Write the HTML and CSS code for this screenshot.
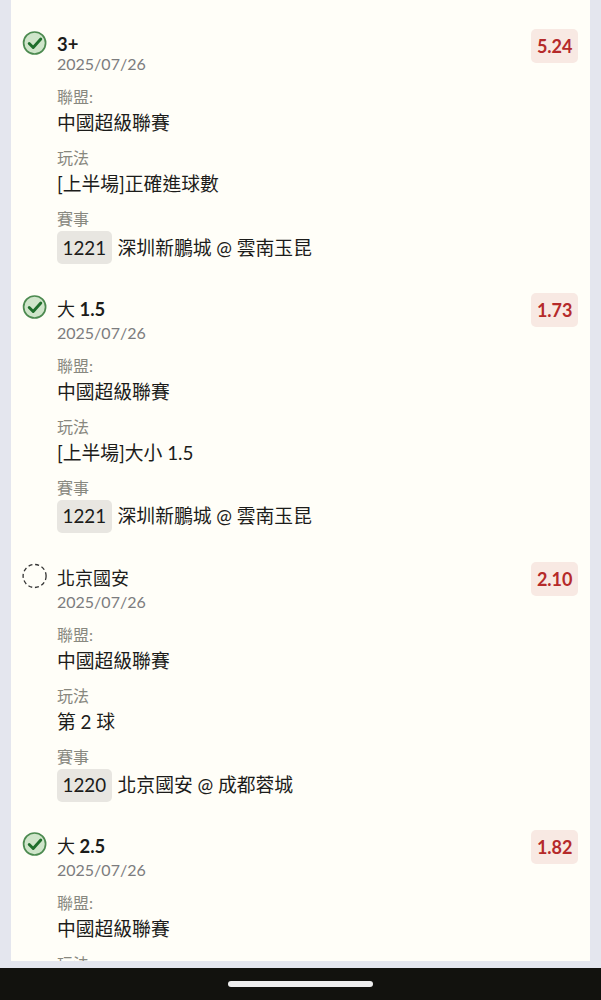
FILE: index.html
```html
<!DOCTYPE html>
<html lang="zh-Hant">
  <head>
    <meta charset="utf-8" />
    <meta name="viewport" content="width=device-width, initial-scale=1.0" />
    <title>投注記錄</title>
    <link rel="stylesheet" href="styles.css">
  </head>

  <body>
    <main class="side">
      <section class="liste">
        <article class="bet">
          <svg class="status" viewBox="0 0 26 26"><circle cx="12.6" cy="13" r="11" class="ring" /><path d="M7.2 13.5l4 4 7.6-8.5" class="tick" /></svg>
          <div class="info">
            <h2 class="valg">3+</h2>
            <p class="dato">2025/07/26</p>
            <p class="label">聯盟:</p>
            <p class="vaerdi">中國超級聯賽</p>
            <p class="label">玩法</p>
            <p class="vaerdi">[上半場]正確進球數</p>
            <p class="label">賽事</p>
            <p class="kamp"><span class="nummer">1221</span>深圳新鵬城 @ 雲南玉昆</p>
          </div>
          <span class="odds">5.24</span>
        </article>

        <article class="bet">
          <svg class="status" viewBox="0 0 26 26"><circle cx="12.6" cy="13" r="11" class="ring" /><path d="M7.2 13.5l4 4 7.6-8.5" class="tick" /></svg>
          <div class="info">
            <h2 class="valg kinesisk"><span class="tynd">大</span> 1.5</h2>
            <p class="dato">2025/07/26</p>
            <p class="label">聯盟:</p>
            <p class="vaerdi">中國超級聯賽</p>
            <p class="label">玩法</p>
            <p class="vaerdi">[上半場]大小 1.5</p>
            <p class="label">賽事</p>
            <p class="kamp"><span class="nummer">1221</span>深圳新鵬城 @ 雲南玉昆</p>
          </div>
          <span class="odds">1.73</span>
        </article>

        <article class="bet">
          <svg class="status" viewBox="0 0 26 26"><circle cx="12.6" cy="13" r="11.5" class="venter" /></svg>
          <div class="info">
            <h2 class="valg kinesisk tynd">北京國安</h2>
            <p class="dato">2025/07/26</p>
            <p class="label">聯盟:</p>
            <p class="vaerdi">中國超級聯賽</p>
            <p class="label">玩法</p>
            <p class="vaerdi">第 2 球</p>
            <p class="label">賽事</p>
            <p class="kamp"><span class="nummer">1220</span>北京國安 @ 成都蓉城</p>
          </div>
          <span class="odds">2.10</span>
        </article>

        <article class="bet">
          <svg class="status" viewBox="0 0 26 26"><circle cx="12.6" cy="13" r="11" class="ring" /><path d="M7.2 13.5l4 4 7.6-8.5" class="tick" /></svg>
          <div class="info">
            <h2 class="valg kinesisk"><span class="tynd">大</span> 2.5</h2>
            <p class="dato">2025/07/26</p>
            <p class="label">聯盟:</p>
            <p class="vaerdi">中國超級聯賽</p>
            <p class="label">玩法</p>
          </div>
          <span class="odds">1.82</span>
        </article>
      </section>
    </main>

    <footer class="navbar"><span class="home"></span></footer>
  </body>
</html>
```

FILE: styles.css
```css
* {
  box-sizing: border-box;
}

body {
  display: flex;
  flex-direction: column;
  height: 1000px;
  margin: 0;
  overflow: hidden;
  font-family: Lato, "Noto Sans CJK TC", sans-serif;
  color: #1c1c1a;
  background-color: #e4e6ee;
}

p,
h2 {
  margin: 0;
}

.side {
  flex: 1;
  min-height: 0;
  padding: 0 11px 7px 11px;
}

.liste {
  height: 100%;
  padding: 29px 12px 0 11px;
  overflow: hidden;
  background-color: #fffef8;
}

.bet {
  display: flex;
  align-items: flex-start;
  margin-bottom: 28.8px;
}

.status {
  flex: none;
  width: 26px;
  height: 26px;
  margin-top: 1px;
  margin-right: 9px;
}

.ring {
  fill: #cfe5ca;
  stroke: #4c8a50;
  stroke-width: 1.7;
}

.tick {
  fill: none;
  stroke: #1f6f2c;
  stroke-width: 2.9;
  stroke-linecap: round;
  stroke-linejoin: round;
}

.venter {
  fill: none;
  stroke: #333;
  stroke-width: 1.3;
  stroke-dasharray: 4 2.8;
}

.info {
  flex: 1;
  padding-top: 4px;
}

.valg {
  font-size: 18.4px;
  font-weight: 700;
}

/* linjen med kinesiske tegn er højere end linjen med kun tal */
.kinesisk {
  padding-top: 1px;
  padding-bottom: 3px;
  line-height: 23px;
}

.tynd {
  font-size: 18px;
  font-weight: 400;
}

.dato {
  font-size: 16px;
  line-height: 18px;
  color: #7c7c7e;
}

.label {
  margin-top: 9px;
  font-size: 16px;
  line-height: 20px;
  color: #88887f;
}

.dato + .label {
  margin-top: 14px;
}

.vaerdi {
  font-size: 18.8px;
  line-height: 32px;
}

.kamp {
  display: flex;
  align-items: center;
  margin-top: 2px;
  font-size: 18.8px;
  line-height: 32px;
}

.nummer {
  margin-right: 6px;
  padding: 0.5px 5.5px;
  border-radius: 5px;
  background-color: #e8e6e1;
}

.odds {
  flex: none;
  padding: 5px 5.5px;
  border-radius: 5px;
  background-color: #f8e9e3;
  color: #b52a2a;
  font-size: 18px;
  font-weight: 700;
  line-height: 24px;
}

.navbar {
  display: flex;
  flex: none;
  justify-content: center;
  align-items: center;
  height: 32px;
  background-color: #12120e;
}

.home {
  width: 145px;
  height: 6px;
  border-radius: 3px;
  background-color: #eeeeee;
}
```
